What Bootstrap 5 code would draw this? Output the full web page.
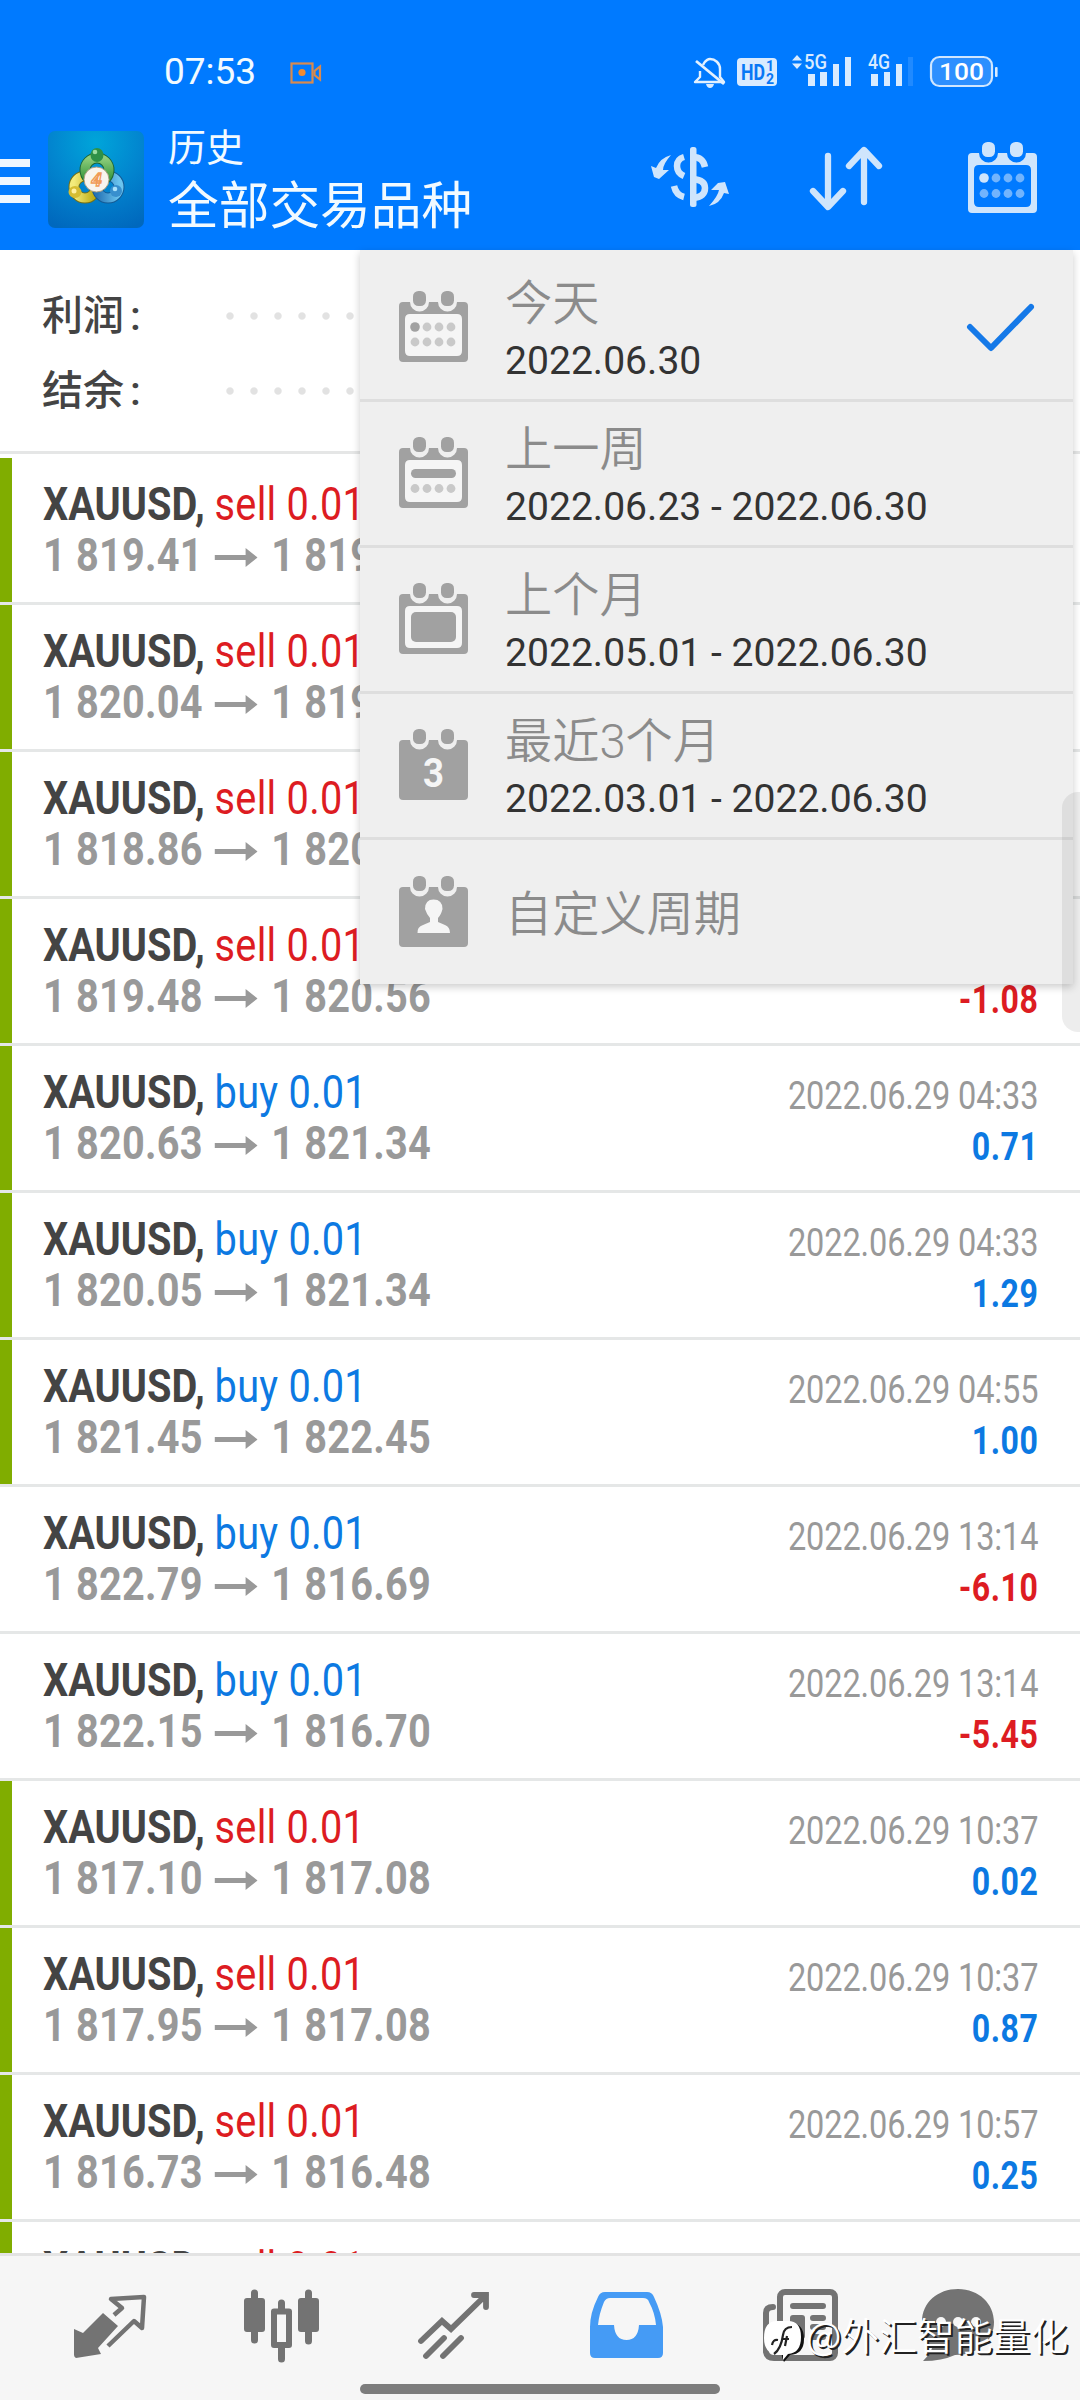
<!DOCTYPE html>
<html lang="zh-CN">
<head>
<meta charset="utf-8">
<meta name="viewport" content="width=device-width, initial-scale=1">
<title>历史</title>
<link rel="stylesheet" href="https://cdn.jsdelivr.net/npm/bootstrap@5.3.0/dist/css/bootstrap.min.css">
<style>
body{font-family:Roboto,"Noto Sans CJK SC",sans-serif;background:#fff;color:#444;line-height:1}
.screen{width:1080px;height:2400px}
.top-area{height:250px;background:#007aff;color:#f2faff}
.status{height:92px;padding:50px 0 0 164px}
.status .clock{font-size:37px;line-height:44px;width:126px}
.status .rec{margin-top:12px}
.status .sys{margin-left:370px}
.appbar{height:158px}
.appbar .burger{width:30px;gap:10px;margin-top:67px}
.burger i{height:8px;background:#eef6ff}
.logo{margin:39px 0 0 18px}
.titles{margin:34px 0 0 24px;width:476px}
.titles .t1{font-size:38px;line-height:44px}
.titles .t2{font-size:50.7px;line-height:64px;margin-top:5px}
.actions{margin-top:46px}
.totals{height:204px;padding:41px 42px 0;border-bottom:3px solid #e5e6e6;font-weight:500;font-size:41px}
.totals .sum-line{height:75px;line-height:50px}
.sum-line b{font-weight:500;width:184px}
.sum-line b span{margin-left:6px}
.sum-line .dots{width:800px;height:8px;margin-top:21px;background:radial-gradient(circle at 4px 4px,#e2e2e2 3.2px,transparent 4.2px) 0 0/24px 8px repeat-x}
.deals{padding-top:4px}
.deal{height:147px;border-bottom:3px solid #e5e7e7;padding:20px 42px 0 43px;position:relative}
.deal.bal::before{content:"";position:absolute;left:0;top:0;width:12px;height:144px;background:#80ad00}
.sq{transform:scaleX(.845);transform-origin:0 50%;white-space:nowrap}
.end{transform-origin:100% 50%;text-align:right}
.sym{font-size:47px;line-height:52px;font-weight:700;color:#444}
.sym span{font-weight:400;letter-spacing:.3px}
.sell{color:#dd1c22}.buy{color:#0c79e2}
.prices{font-size:47px;line-height:50px;font-weight:700;color:#999;letter-spacing:.25px}
.prices svg{margin:4px 16px 0 14px}
.when{font-size:38.5px;line-height:44px;color:#999;margin-top:8px;letter-spacing:-.15px}
.gain{font-size:38px;line-height:44px;font-weight:700;margin-top:7px;letter-spacing:.6px}
.period{position:absolute;left:360px;top:250px;width:713px;background:#efefef;padding-top:6px;box-shadow:0 3px 8px rgba(0,0,0,.2);z-index:2}
.period .opt{height:146px;padding-left:39px;border-bottom:3px solid #dedede}
.period .opt:last-child{border:0;height:144px}
.opt .cal{margin-right:37px;margin-top:-2px}
.opt .nm{font-size:47.2px;line-height:54px;color:#8b8b8b;font-weight:350;margin-top:6px}
.opt .rg{font-size:39.1px;line-height:46px;color:#333;margin-top:7px}
.scroll-thumb{position:absolute;left:1062px;top:792px;width:18px;height:240px;border-radius:16px 0 0 16px;background:rgba(60,60,60,.09);z-index:3}
.tabs{position:absolute;left:0;top:2253px;width:1080px;height:147px;background:#f6f6f6;border-top:3px solid #e3e3e3;z-index:4;padding:30px 78px 0 70px}
.homebar{position:absolute;left:360px;top:2384px;width:360px;height:10px;border-radius:5px;background:#7d7d7d;z-index:5}
.wm{position:absolute;left:763px;top:2312px;height:50px;z-index:6;color:#fff;font-family:"Noto Sans CJK SC",sans-serif;font-size:37.8px;font-weight:350;line-height:44px;white-space:nowrap;text-shadow:2px 2px 0 #222}
</style>
<script src="https://cdn.jsdelivr.net/npm/bootstrap@5.3.0/dist/js/bootstrap.bundle.min.js"></script>
</head>
<body>
<svg width="0" height="0" class="position-absolute">
  <defs>
    <g id="rings"><rect x="14" y="0" width="13" height="15" rx="5.5"/><rect x="42" y="0" width="13" height="15" rx="5.5"/></g>
    <path id="frame" fill-rule="evenodd" d="M4 11H11A9.500 9.500 0 0 0 30 11H39A9.500 9.500 0 0 0 58 11H65Q69 11 69 15V67Q69 71 65 71H4Q0 71 0 67V15Q0 11 4 11ZM11 23Q6 23 6 28V60Q6 65 11 65H58Q63 65 63 60V28Q63 23 58 23Z"/>
    <path id="solid" d="M4 11H11A9.500 9.500 0 0 0 30 11H39A9.500 9.500 0 0 0 58 11H65Q69 11 69 15V67Q69 71 65 71H4Q0 71 0 67V15Q0 11 4 11Z"/>
    <g id="dots4"><circle cx="28" cy="0" r="4.400"/><circle cx="40" cy="0" r="4.400"/><circle cx="52" cy="0" r="4.400"/></g>
    <path id="arr" d="M0 7H31V0L43 9.500L31 19V12H0Z" fill="#999"/>
  </defs>
</svg>
<div class="screen position-relative overflow-hidden">
  <header class="top-area">
    <div class="status d-flex">
      <div class="clock">07:53</div>
      <svg class="rec" width="32" height="22" viewBox="0 0 32 22" fill="none" stroke="#d98a4e" stroke-width="2.200"><rect x="1.500" y="1.500" width="21" height="19"/><circle cx="12" cy="10.500" r="3.600" fill="#f08a30" stroke="none"/><path d="M30 4.500V17.500L24.500 13V9Z"/></svg>
      <svg class="sys" width="310" height="42" viewBox="692 50 310 42" fill="#d9ebff">
        <g fill="none" stroke="#e3f1ff" stroke-width="2.400" stroke-linejoin="round"><path d="M703 65C705 60 709 59 710 59C715 59 720 63 720 69V77L724 82H695L700 77V71"/><path d="M696 61L724 84" stroke-width="2.800"/></g><path d="M706 84H714Q713 88 710 88Q707 88 706 84Z"/>
        <rect x="737" y="58" width="40" height="28" rx="4"/>
        <g font-family="Roboto" font-weight="700" fill="#0878f5"><text x="741" y="80" font-size="22" textLength="24" lengthAdjust="spacingAndGlyphs">HD</text><text x="766" y="71" font-size="14">1</text><text x="766" y="84" font-size="14">2</text></g>
        <path d="M792 60.500L797 55L802 60.500ZM792 63.500H802L797 69Z"/>
        <g font-family="Roboto" font-weight="500" font-size="20"><text x="804" y="69" textLength="23" lengthAdjust="spacingAndGlyphs">5G</text><text x="868" y="69" textLength="22" lengthAdjust="spacingAndGlyphs">4G</text></g>
        <path d="M808 74H815V86H808ZM820 72H827V86H820ZM833 64H839V86H833ZM845 57H851V86H845ZM871 74H878V86H871ZM884 72H890V86H884ZM896 64H902V86H896Z"/><path d="M908 57H913V86H908Z" opacity=".15"/>
        <rect x="931" y="57" width="61" height="29" rx="8.500" fill="#2c8fff" stroke="#cfe6ff" stroke-width="2.200"/><rect x="995" y="67" width="2.600" height="10" rx="1"/>
        <text x="939" y="80" font-family="Roboto" font-weight="500" font-size="24" textLength="45" lengthAdjust="spacingAndGlyphs" fill="#fff">100</text>
      </svg>
    </div>
    <div class="appbar d-flex align-items-start">
      <div class="burger d-flex flex-column"><i></i><i></i><i></i></div>
      <svg class="logo flex-shrink-0" width="96" height="97" viewBox="0 0 96 97">
        <defs><radialGradient id="bgk" cx=".5" cy=".12" r=".95"><stop offset="0" stop-color="#00a5da"/><stop offset=".5" stop-color="#0285cf"/><stop offset="1" stop-color="#0068bd"/></radialGradient>
        <linearGradient id="gr" x2="0" y2="1"><stop stop-color="#8fce7c"/><stop offset="1" stop-color="#2b8f35"/></linearGradient><linearGradient id="ye"><stop stop-color="#f3eb7b"/><stop offset="1" stop-color="#b9a70c"/></linearGradient><linearGradient id="bl"><stop stop-color="#2674b6"/><stop offset="1" stop-color="#6bc4ee"/></linearGradient></defs>
        <rect width="96" height="97" rx="7" fill="url(#bgk)"/>
        <circle cx="37" cy="56" r="11" fill="none" stroke="#726f17" stroke-width="11"/><circle cx="37" cy="56" r="11" fill="none" stroke="url(#ye)" stroke-width="9"/>
        <circle cx="60" cy="56" r="11" fill="none" stroke="#145a94" stroke-width="11"/><circle cx="60" cy="56" r="11" fill="none" stroke="url(#bl)" stroke-width="9"/>
        <circle cx="49" cy="39" r="12" fill="none" stroke="#1d6434" stroke-width="11"/><circle cx="49" cy="39" r="12" fill="none" stroke="url(#gr)" stroke-width="9"/>
        <ellipse cx="49" cy="24" rx="6.500" ry="7" fill="#2e9147"/><circle cx="47" cy="21" r="2.300" fill="#99dca0"/><ellipse cx="27" cy="61" rx="6.500" ry="6" fill="#d6bd32"/><circle cx="26" cy="60" r="2.500" fill="#fff0a0"/><ellipse cx="68" cy="60" rx="6" ry="6" fill="#388fce"/><circle cx="67" cy="58" r="2.300" fill="#a9e1fb"/>
        <circle cx="48.500" cy="48.500" r="12.500" fill="#f8f4ee" stroke="#a99e81"/><text x="48.500" y="55" font-family="Roboto" font-size="19" font-style="italic" font-weight="700" text-anchor="middle" fill="#fff" stroke="#f09b57" stroke-width="1.400">4</text>
      </svg>
      <div class="titles flex-shrink-0"><div class="t1">历史</div><div class="t2">全部交易品种</div></div>
      <svg class="actions" width="400" height="80" viewBox="644 138 400 80" fill="#cfe5fc">
        <rect x="690" y="147" width="6.500" height="60" rx="2.500"/>
        <g fill="none" stroke="#cfe5fc" stroke-width="6.500"><path d="M684 157Q677 159 677 166Q677 173 684 176M684 197Q676 195 674 186M693 157Q703 157 705 167M693 179Q705 180 705 188Q705 197 693 198"/></g>
        <path d="M671 155Q663 164 663 170H669L659 179L654 177L651 166L656 168Q660 158 671 155ZM709 206Q718 196 719 190H711L718 183L725 182L729 194L724 193Q720 204 709 206Z"/>
        <path d="M828 156V204M813 191L828 207L843 191M864 202V152M849 166L864 150L879 166" fill="none" stroke="#cfe5fc" stroke-width="6.300" stroke-linecap="round" stroke-linejoin="round"/>
        <g transform="translate(968 142)"><use href="#rings"/><use href="#frame"/><circle cx="16" cy="36" r="4.800"/><g opacity=".55"><use href="#dots4" y="36"/><circle cx="16" cy="51.500" r="4.400"/><use href="#dots4" y="51.500"/></g></g>
      </svg>
    </div>
  </header>

  <section class="totals">
    <div class="sum-line d-flex"><b>利润<span>:</span></b><span class="dots"></span></div>
    <div class="sum-line d-flex"><b>结余<span>:</span></b><span class="dots"></span></div>
  </section>

  <main class="deals">
    <div class="deal bal d-flex justify-content-between"><div class="sq"><div class="sym">XAUUSD, <span class="sell">sell 0.01</span></div><div class="prices d-flex align-items-center">1 819.41<svg width="51" height="19" viewBox="0 0 43 19" preserveAspectRatio="none"><use href="#arr"/></svg>1 819.50</div></div></div>
    <div class="deal bal d-flex justify-content-between"><div class="sq"><div class="sym">XAUUSD, <span class="sell">sell 0.01</span></div><div class="prices d-flex align-items-center">1 820.04<svg width="51" height="19" viewBox="0 0 43 19" preserveAspectRatio="none"><use href="#arr"/></svg>1 819.50</div></div></div>
    <div class="deal bal d-flex justify-content-between"><div class="sq"><div class="sym">XAUUSD, <span class="sell">sell 0.01</span></div><div class="prices d-flex align-items-center">1 818.86<svg width="51" height="19" viewBox="0 0 43 19" preserveAspectRatio="none"><use href="#arr"/></svg>1 820.56</div></div></div>
    <div class="deal bal d-flex justify-content-between"><div class="sq"><div class="sym">XAUUSD, <span class="sell">sell 0.01</span></div><div class="prices d-flex align-items-center">1 819.48<svg width="51" height="19" viewBox="0 0 43 19" preserveAspectRatio="none"><use href="#arr"/></svg>1 820.56</div></div><div class="sq end"><div class="when">&nbsp;</div><div class="gain sell">-1.08</div></div></div>
    <div class="deal bal d-flex justify-content-between"><div class="sq"><div class="sym">XAUUSD, <span class="buy">buy 0.01</span></div><div class="prices d-flex align-items-center">1 820.63<svg width="51" height="19" viewBox="0 0 43 19" preserveAspectRatio="none"><use href="#arr"/></svg>1 821.34</div></div><div class="sq end"><div class="when">2022.06.29 04:33</div><div class="gain buy">0.71</div></div></div>
    <div class="deal bal d-flex justify-content-between"><div class="sq"><div class="sym">XAUUSD, <span class="buy">buy 0.01</span></div><div class="prices d-flex align-items-center">1 820.05<svg width="51" height="19" viewBox="0 0 43 19" preserveAspectRatio="none"><use href="#arr"/></svg>1 821.34</div></div><div class="sq end"><div class="when">2022.06.29 04:33</div><div class="gain buy">1.29</div></div></div>
    <div class="deal bal d-flex justify-content-between"><div class="sq"><div class="sym">XAUUSD, <span class="buy">buy 0.01</span></div><div class="prices d-flex align-items-center">1 821.45<svg width="51" height="19" viewBox="0 0 43 19" preserveAspectRatio="none"><use href="#arr"/></svg>1 822.45</div></div><div class="sq end"><div class="when">2022.06.29 04:55</div><div class="gain buy">1.00</div></div></div>
    <div class="deal d-flex justify-content-between"><div class="sq"><div class="sym">XAUUSD, <span class="buy">buy 0.01</span></div><div class="prices d-flex align-items-center">1 822.79<svg width="51" height="19" viewBox="0 0 43 19" preserveAspectRatio="none"><use href="#arr"/></svg>1 816.69</div></div><div class="sq end"><div class="when">2022.06.29 13:14</div><div class="gain sell">-6.10</div></div></div>
    <div class="deal d-flex justify-content-between"><div class="sq"><div class="sym">XAUUSD, <span class="buy">buy 0.01</span></div><div class="prices d-flex align-items-center">1 822.15<svg width="51" height="19" viewBox="0 0 43 19" preserveAspectRatio="none"><use href="#arr"/></svg>1 816.70</div></div><div class="sq end"><div class="when">2022.06.29 13:14</div><div class="gain sell">-5.45</div></div></div>
    <div class="deal bal d-flex justify-content-between"><div class="sq"><div class="sym">XAUUSD, <span class="sell">sell 0.01</span></div><div class="prices d-flex align-items-center">1 817.10<svg width="51" height="19" viewBox="0 0 43 19" preserveAspectRatio="none"><use href="#arr"/></svg>1 817.08</div></div><div class="sq end"><div class="when">2022.06.29 10:37</div><div class="gain buy">0.02</div></div></div>
    <div class="deal bal d-flex justify-content-between"><div class="sq"><div class="sym">XAUUSD, <span class="sell">sell 0.01</span></div><div class="prices d-flex align-items-center">1 817.95<svg width="51" height="19" viewBox="0 0 43 19" preserveAspectRatio="none"><use href="#arr"/></svg>1 817.08</div></div><div class="sq end"><div class="when">2022.06.29 10:37</div><div class="gain buy">0.87</div></div></div>
    <div class="deal bal d-flex justify-content-between"><div class="sq"><div class="sym">XAUUSD, <span class="sell">sell 0.01</span></div><div class="prices d-flex align-items-center">1 816.73<svg width="51" height="19" viewBox="0 0 43 19" preserveAspectRatio="none"><use href="#arr"/></svg>1 816.48</div></div><div class="sq end"><div class="when">2022.06.29 10:57</div><div class="gain buy">0.25</div></div></div>
    <div class="deal bal d-flex"><div class="sq"><div class="sym">XAUUSD, <span class="sell">sell 0.01</span></div></div></div>
  </main>

  <div class="period">
    <div class="opt d-flex align-items-center">
      <svg class="cal" width="69" height="71" fill="#a1a1a1"><use href="#rings"/><rect x="4" y="20" width="61" height="48" fill="#f5f5f5"/><use href="#frame"/><circle cx="16" cy="36" r="4.800"/><g fill="#c9c9c9"><use href="#dots4" y="36"/><circle cx="16" cy="51" r="4.400"/><use href="#dots4" y="51"/></g></svg>
      <div class="flex-grow-1"><div class="nm">今天</div><div class="rg">2022.06.30</div></div>
      <svg class="me-4" width="84" height="52" viewBox="0 0 84 52" fill="none" stroke="#1579e8" stroke-width="6" stroke-linecap="round" stroke-linejoin="round"><path d="M5 25L26 46L66 5"/></svg>
    </div>
    <div class="opt d-flex align-items-center">
      <svg class="cal" width="69" height="71" fill="#a1a1a1"><use href="#rings"/><rect x="4" y="20" width="61" height="48" fill="#f5f5f5"/><use href="#frame"/><rect x="12" y="32" width="45" height="9" rx="4.500"/><g fill="#c9c9c9"><circle cx="16" cy="51.500" r="4.400"/><use href="#dots4" y="51.500"/></g></svg>
      <div><div class="nm">上一周</div><div class="rg">2022.06.23 - 2022.06.30</div></div>
    </div>
    <div class="opt d-flex align-items-center">
      <svg class="cal" width="69" height="71" fill="#a1a1a1"><use href="#rings"/><rect x="4" y="20" width="61" height="48" fill="#f5f5f5"/><use href="#frame"/><rect x="12" y="29" width="45" height="30" rx="5"/></svg>
      <div><div class="nm">上个月</div><div class="rg">2022.05.01 - 2022.06.30</div></div>
    </div>
    <div class="opt d-flex align-items-center">
      <svg class="cal" width="69" height="71" fill="#a1a1a1"><use href="#rings"/><use href="#solid"/><text x="34.500" y="57.500" font-family="Roboto" font-weight="700" font-size="41" text-anchor="middle" fill="#f5f5f5" textLength="21" lengthAdjust="spacingAndGlyphs">3</text></svg>
      <div><div class="nm">最近3个月</div><div class="rg">2022.03.01 - 2022.06.30</div></div>
    </div>
    <div class="opt d-flex align-items-center">
      <svg class="cal" width="69" height="71" fill="#a1a1a1"><use href="#rings"/><use href="#solid"/><path d="M18.500 57Q18 51 24 49L31 46V42Q28 39 26 33Q26 23.500 34.500 23.500Q43.500 23.500 43.500 33Q42 39 39 42V46L46 49Q51 51 51 57Z" fill="#f5f5f5"/></svg>
      <div class="nm">自定义周期</div>
    </div>
  </div>
  <div class="scroll-thumb"></div>

  <nav class="tabs d-flex">
    <svg width="930" height="90" viewBox="70 2286 930 90" fill="#737373">
      <path d="M74 2329L83 2333L103 2313L118 2326L98 2348L101 2354L76 2358Q74 2357 74 2355Z"/>
      <path d="M114 2315L122 2308L111 2299L144 2297L142 2328L134 2321L108 2346" fill="none" stroke="#737373" stroke-width="4.500" stroke-linejoin="round"/>
      <path d="M251 2293a3.500 3.500 0 0 1 7 0V2298H262Q265 2298 265 2301V2329Q265 2332 262 2332H258V2340a3.500 3.500 0 0 1-7 0V2332H247Q244 2332 244 2329V2301Q244 2298 247 2298H251ZM305 2293a3.500 3.500 0 0 1 7 0V2298H316Q319 2298 319 2301V2329Q319 2332 316 2332H312V2341a3.500 3.500 0 0 1-7 0V2332H301Q298 2332 298 2329V2301Q298 2298 301 2298H305Z"/>
      <path fill-rule="evenodd" d="M278 2303a3.500 3.500 0 0 1 7 0V2308.500H289Q292 2308.500 292 2311.500V2345Q292 2348 289 2348H285V2359a3.500 3.500 0 0 1-7 0V2348H274Q271 2348 271 2345V2311.500Q271 2308.500 274 2308.500H278ZM277 2314.500V2342H286V2314.500Z"/>
      <path d="M421 2341L442 2321L451 2329L486 2295M474 2295H486V2307M426 2356L444 2338M443 2356L461 2338" fill="none" stroke="#737373" stroke-width="5.800" stroke-linecap="round"/>
      <path fill="#459bf5" fill-rule="evenodd" d="M605 2292H647Q652 2292 654 2297Q662 2314 663 2327V2353Q663 2358 658 2358H595Q590 2358 590 2353V2327Q590 2313 598 2297Q600 2292 605 2292ZM610 2298Q606 2298 604 2302Q599 2314 598 2325H614Q615 2340 626.500 2340Q638 2340 639 2325H656Q655 2313 649 2302Q648 2298 643 2298Z"/>
      <g fill="none" stroke="#737373" stroke-width="6" stroke-linecap="round"><rect x="780" y="2292" width="55" height="66" rx="5"/><path d="M773 2307Q766 2307 766 2313V2352Q767 2358 774 2358H800M793 2306H823M813 2318H823M813 2327H823M813 2337H823"/></g><rect x="790" y="2315" width="15" height="24" rx="3"/>
      <path d="M958 2289C979 2289 994 2304 994 2322C994 2342 977 2355 955 2355Q942 2361 923 2361Q931 2353 932 2348C925 2341 922 2332 922 2322C922 2302 938 2289 958 2289Z"/><g fill="#f6f6f6"><circle cx="941" cy="2322" r="5"/><circle cx="958" cy="2322" r="5"/><circle cx="976" cy="2322" r="5"/></g>
    </svg>
  </nav>
  <div class="homebar"></div>
  <div class="wm d-flex">
    <svg width="43" height="52" viewBox="0 0 43 52" class="flex-shrink-0"><path d="M16 11H27Q41 11 41 27Q41 42 27 43L21 50L19 45Z" fill="#111"/><path d="M14 9H25Q38 9 38 25Q38 41 25 42L20 48V43H14Q1 41 1 26Q1 9 14 9Z" fill="#fff"/><path d="M29 15Q21 15 20 23Q18 37 11 42M9 33Q10 27 15 28M19 27H26M24 24L22 34" fill="none" stroke="#222" stroke-width="2.200"/></svg>
    <span>@外汇智能量化</span>
  </div>
</div>
</body>
</html>
